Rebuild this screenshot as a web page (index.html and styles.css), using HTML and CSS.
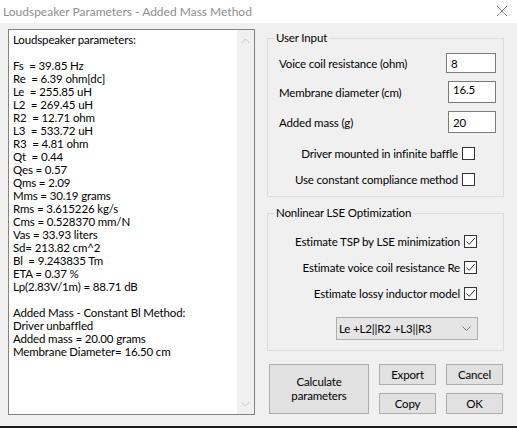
FILE: index.html
```html
<!DOCTYPE html>
<html lang="en">
<head>
<meta charset="utf-8">
<title>Loudspeaker Parameters - Added Mass Method</title>
<link rel="stylesheet" href="styles.css">
</head>
<body>
<div class="window">
  <div class="titlebar">
    <span class="title">Loudspeaker Parameters - Added Mass Method</span>
    <svg class="close" width="12" height="12" viewBox="0 0 12 12"><path d="M1 1 L11 11 M11 1 L1 11" stroke="#8c8c8c" stroke-width="1" fill="none"/></svg>
  </div>
  <div class="client">
    <div class="output">
      <pre class="output-text">Loudspeaker parameters:

Fs  = 39.85 Hz
Re  = 6.39 ohm[dc]
Le  = 255.85 uH
L2  = 269.45 uH
R2  = 12.71 ohm
L3  = 533.72 uH
R3  = 4.81 ohm
Qt  = 0.44
Qes = 0.57
Qms = 2.09
Mms = 30.19 grams
Rms = 3.615226 kg/s
Cms = 0.528370 mm/N
Vas = 33.93 liters
Sd= 213.82 cm^2
Bl  = 9.243835 Tm
ETA = 0.37 %
Lp(2.83V/1m) = 88.71 dB

Added Mass - Constant Bl Method:
Driver unbaffled
Added mass = 20.00 grams
Membrane Diameter= 16.50 cm</pre>
      <div class="scrollbar">
        <svg width="9" height="6" viewBox="0 0 9 6"><path d="M0.5 5 L4.5 1 L8.5 5" stroke="#c4c4c4" fill="none"/></svg>
        <svg width="9" height="6" viewBox="0 0 9 6"><path d="M0.5 1 L4.5 5 L8.5 1" stroke="#c4c4c4" fill="none"/></svg>
      </div>
    </div>
    <div class="side">
      <fieldset class="group group-input">
        <legend>User Input</legend>
        <div class="fields">
          <div class="field"><span>Voice coil resistance (ohm)</span><span class="textbox textbox-first">8</span></div>
          <div class="field"><span>Membrane diameter (cm)</span><span class="textbox textbox-high">16.5</span></div>
          <div class="field"><span>Added mass (g)</span><span class="textbox">20</span></div>
        </div>
        <div class="checks">
          <div class="check"><span>Driver mounted in infinite baffle</span><span class="box"></span></div>
          <div class="check"><span>Use constant compliance method</span><span class="box"></span></div>
        </div>
      </fieldset>
      <fieldset class="group group-lse">
        <legend>Nonlinear LSE Optimization</legend>
        <div class="checks">
          <div class="check"><span>Estimate TSP by LSE minimization</span><span class="box"><svg width="11" height="11" viewBox="0 0 11 11"><path d="M1.5 5.5 L4.2 8.3 L9.8 2" stroke="#333" stroke-width="1" fill="none"/></svg></span></div>
          <div class="check"><span>Estimate voice coil resistance Re</span><span class="box"><svg width="11" height="11" viewBox="0 0 11 11"><path d="M1.5 5.5 L4.2 8.3 L9.8 2" stroke="#333" stroke-width="1" fill="none"/></svg></span></div>
          <div class="check"><span>Estimate lossy inductor model</span><span class="box"><svg width="11" height="11" viewBox="0 0 11 11"><path d="M1.5 5.5 L4.2 8.3 L9.8 2" stroke="#333" stroke-width="1" fill="none"/></svg></span></div>
        </div>
        <div class="combo-row">
          <div class="combo"><span>Le +L2||R2 +L3||R3</span><svg width="9" height="5" viewBox="0 0 9 5"><path d="M0.5 0.5 L4.5 4.5 L8.5 0.5" stroke="#777" fill="none"/></svg></div>
        </div>
      </fieldset>
      <div class="actions">
        <button class="btn btn-calc">Calculate<br>parameters</button>
        <button class="btn">Export</button>
        <button class="btn">Cancel</button>
        <button class="btn">Copy</button>
        <button class="btn">OK</button>
      </div>
    </div>
  </div>
  <div class="bottom-edge"></div>
</div>
</body>
</html>
```

FILE: styles.css
```css
* { box-sizing: border-box; }
html, body { margin: 0; padding: 0; }
body {
  width: 517px;
  height: 428px;
  overflow: hidden;
  font-family: "Lato", "Noto Sans", sans-serif;
  font-size: 11.5px;
  letter-spacing: -0.15px;
  color: #000;
  background: #f0f0f0;
}
.window { width: 517px; height: 428px; display: flex; flex-direction: column; }
.titlebar {
  height: 23px;
  background: #fff;
  display: flex;
  align-items: center;
  justify-content: space-between;
  padding: 0 9px 0 3px;
  flex: none;
}
.title { color: #8e8e8e; font-size: 12px; letter-spacing: 0; }
.close { display: block; margin-top: -1px; }
.client { flex: 1; display: flex; align-items: flex-start; }
.bottom-edge { height: 2px; background: #1c1c1c; flex: none; }

.output {
  margin: 6px 0 0 8px;
  width: 247px;
  height: 386px;
  border: 1px solid #828282;
  background: #fff;
  display: flex;
}
.output-text {
  flex: 1;
  margin: 0;
  padding: 3px 0 0 4px;
  font-family: inherit;
  font-size: 11.5px;
  line-height: 13px;
  white-space: pre;
  overflow: hidden;
}
.scrollbar {
  width: 17px;
  background: #f0f0f0;
  display: flex;
  flex-direction: column;
  justify-content: space-between;
  align-items: center;
  padding: 8px 0 7px;
}
.scrollbar svg { display: block; }

.side { margin-left: 12px; width: 237px; display: flex; flex-direction: column; }
.group {
  margin: 7px 0 0;
  border: 1px solid #dcdcdc;
  padding: 0;
  min-width: 0;
}
.group legend {
  margin-left: 6px;
  padding: 0 2px;
  line-height: 16px;
}
.group-lse { margin-top: 8px; }

.fields { display: flex; flex-direction: column; gap: 8px; padding: 7px 7px 0 11px; }
.field { display: flex; align-items: center; justify-content: space-between; }
.textbox {
  width: 48px;
  height: 22px;
  border: 1px solid #7a7a7a;
  background: #fff;
  padding: 0 0 0 4px;
  display: flex;
  align-items: center;
}
.textbox-first { width: 50px; height: 20px; }
.textbox-high { align-items: flex-start; padding-top: 1px; }

.checks { display: flex; flex-direction: column; gap: 13px; margin-top: 14px; padding-right: 28px; }
.group-input .checks { padding-bottom: 10px; }
.group-lse .checks { padding-right: 26px; }
.check { display: flex; align-items: center; justify-content: flex-end; gap: 4px; height: 13px; }
.box {
  width: 13px;
  height: 13px;
  border: 1px solid #333;
  background: #fff;
  display: flex;
  align-items: center;
  justify-content: center;
}
.box svg { display: block; }

.combo-row { display: flex; justify-content: flex-end; padding: 17px 25px 10px 0; }
.combo {
  width: 142px;
  height: 23px;
  background: #e5e5e5;
  border: 1px solid #adadad;
  display: flex;
  align-items: center;
  justify-content: space-between;
  padding: 0 6px 0 2px;
}
.combo svg { display: block; }

.actions {
  margin: 13px 0 0 2px;
  display: grid;
  grid-template-columns: 100px 57px 57px;
  grid-template-rows: 21px 21px;
  column-gap: 10px;
  row-gap: 8px;
}
.btn {
  font-family: inherit;
  font-size: 11.5px;
  letter-spacing: -0.15px;
  background: #e1e1e1;
  border: 1px solid #adadad;
  color: #000;
  padding: 0;
  margin: 0;
  line-height: 14px;
}
.btn-calc { grid-row: 1 / span 2; }
```
